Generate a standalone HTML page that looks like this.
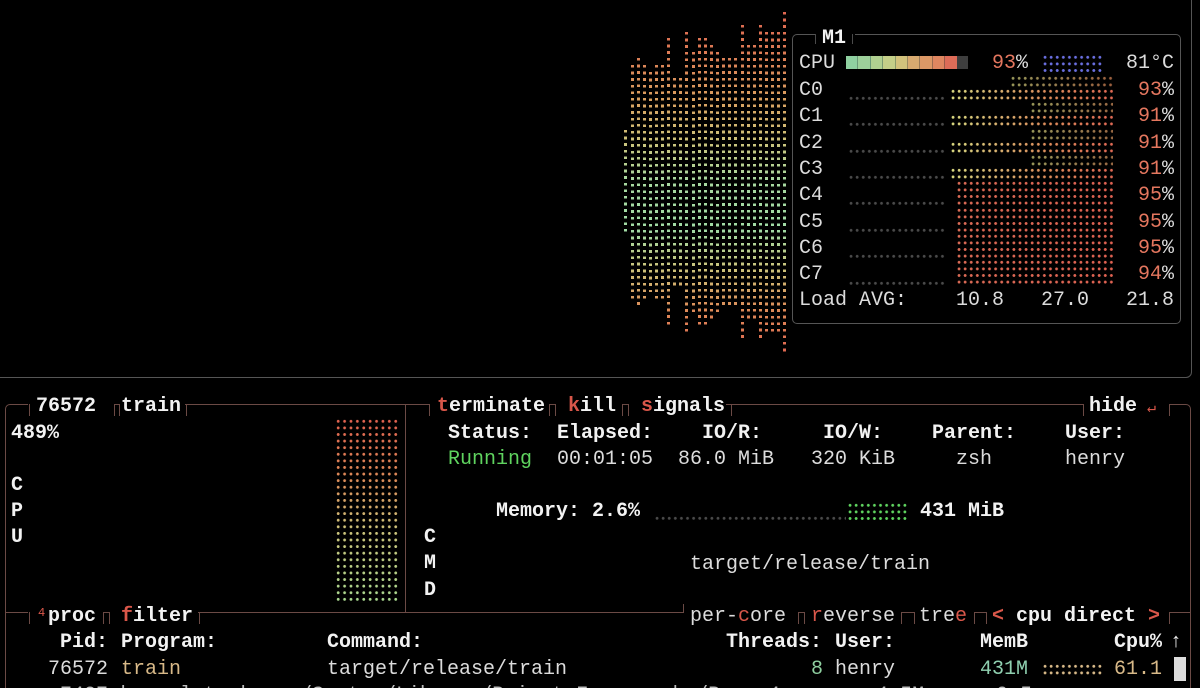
<!DOCTYPE html>
<html><head><meta charset="utf-8"><style>
html,body{margin:0;padding:0;background:#000;width:1200px;height:688px;overflow:hidden;}
body{position:relative;font-family:"Liberation Mono","DejaVu Sans Mono",monospace;font-size:20px;color:#dcdcdc;}
.t{position:absolute;line-height:26px;height:26px;white-space:pre;margin-top:2px;}
.b{font-weight:bold;color:#f2f2f2;}
.r{color:#d9574a;}
.ln{position:absolute;background:#6b4a45;}
.gl{position:absolute;background:#4a4a4a;}
.col{position:absolute;width:3px;background:linear-gradient(to bottom,#e0604f 0px,#dd7a55 50px,#d9a060 100px,#cdc27a 140px,#a8d8a0 180px,#a0dba5 230px,#cdc27a 270px,#dd8a58 310px,#e0604f 360px) fixed;
-webkit-mask-image:repeating-linear-gradient(to bottom,#000 0 2.7px,transparent 2.7px 6.6px);mask-image:repeating-linear-gradient(to bottom,#000 0 2.7px,transparent 2.7px 6.6px);}
.dots{position:absolute;-webkit-mask-image:radial-gradient(circle,#000 1.3px,transparent 1.6px);mask-image:radial-gradient(circle,#000 1.3px,transparent 1.6px);-webkit-mask-size:6.1px 6.6px;mask-size:6.1px 6.6px;}
.core{background:linear-gradient(to right,#d8d880 0px,#d9b070 50px,#dd8a5a 100px,#df6a55 160px);}
.core2{background:linear-gradient(to right,#d96a55,#df6252);}
</style></head><body>

<div style="position:absolute;left:-5px;top:-10px;width:1195px;height:386px;border:1px solid #555;border-radius:0 0 6px 0;"></div>

<div class="col" style="left:624px;top:130px;height:105px"></div>
<div class="col" style="left:631px;top:65px;height:234px"></div>
<div class="col" style="left:637px;top:58px;height:248px"></div>
<div class="col" style="left:643px;top:65px;height:234px"></div>
<div class="col" style="left:649px;top:72px;height:220px"></div>
<div class="col" style="left:655px;top:65px;height:234px"></div>
<div class="col" style="left:661px;top:65px;height:234px"></div>
<div class="col" style="left:667px;top:38px;height:288px"></div>
<div class="col" style="left:673px;top:78px;height:208px"></div>
<div class="col" style="left:679px;top:78px;height:208px"></div>
<div class="col" style="left:685px;top:32px;height:300px"></div>
<div class="col" style="left:692px;top:52px;height:260px"></div>
<div class="col" style="left:698px;top:38px;height:288px"></div>
<div class="col" style="left:704px;top:38px;height:288px"></div>
<div class="col" style="left:710px;top:45px;height:274px"></div>
<div class="col" style="left:716px;top:52px;height:260px"></div>
<div class="col" style="left:722px;top:58px;height:248px"></div>
<div class="col" style="left:728px;top:58px;height:248px"></div>
<div class="col" style="left:734px;top:58px;height:248px"></div>
<div class="col" style="left:741px;top:25px;height:314px"></div>
<div class="col" style="left:747px;top:45px;height:274px"></div>
<div class="col" style="left:753px;top:45px;height:274px"></div>
<div class="col" style="left:759px;top:25px;height:314px"></div>
<div class="col" style="left:765px;top:32px;height:300px"></div>
<div class="col" style="left:771px;top:32px;height:300px"></div>
<div class="col" style="left:783px;top:12px;height:340px"></div>
<div class="col" style="left:777px;top:32px;height:300px"></div>

<div style="position:absolute;left:792px;top:34px;width:387px;height:288px;border:1px solid #555;border-radius:5px;"></div>
<div style="position:absolute;left:815px;top:30px;width:40px;height:10px;background:#000"></div>
<div class="gl" style="left:815px;top:34px;width:1px;height:10px"></div>
<div class="gl" style="left:852px;top:34px;width:1px;height:10px"></div>
<div class="t b" style="left:822px;top:24px">M1</div>
<div class="t" style="left:799px;top:49px">CPU</div>
<div style="position:absolute;left:846px;top:56px;width:122px;height:13px;display:flex">
<div style="flex:1;background:#8fd0a0;border-right:1px solid #6a9a78"></div><div style="flex:1;background:#9dd09a;border-right:1px solid #6a9a78"></div><div style="flex:1;background:#b0d090;border-right:1px solid #7a9a70"></div><div style="flex:1;background:#c4cf88;border-right:1px solid #8a9a68"></div><div style="flex:1;background:#d2c27c;border-right:1px solid #9a8a60"></div><div style="flex:1;background:#d8aa70;border-right:1px solid #9a7a58"></div><div style="flex:1;background:#dc9866;border-right:1px solid #9a6a50"></div><div style="flex:1;background:#df8660;border-right:1px solid #9a5a48"></div><div style="flex:1;background:#de6c58;"></div><div style="flex:1;background:#3e3e3e;"></div></div>
<div class="t" style="left:992px;top:49px"><span style="color:#e5775f">93</span>%</div>
<div class="dots" style="left:1042px;top:54px;width:60px;height:20px;background:#6a6fe0"></div>
<div class="t" style="left:1126px;top:49px">81°C</div>

<div class="t" style="left:799px;top:76px">C0</div>
<div class="t" style="left:799px;top:102px">C1</div>
<div class="t" style="left:799px;top:129px">C2</div>
<div class="t" style="left:799px;top:155px">C3</div>
<div class="t" style="left:799px;top:181px">C4</div>
<div class="t" style="left:799px;top:208px">C5</div>
<div class="t" style="left:799px;top:234px">C6</div>
<div class="t" style="left:799px;top:260px">C7</div>
<div class="t" style="left:1138px;top:76px"><span style="color:#e5775f">93</span>%</div>
<div class="t" style="left:1138px;top:102px"><span style="color:#e5775f">91</span>%</div>
<div class="t" style="left:1138px;top:129px"><span style="color:#e5775f">91</span>%</div>
<div class="t" style="left:1138px;top:155px"><span style="color:#e5775f">91</span>%</div>
<div class="t" style="left:1138px;top:181px"><span style="color:#e5775f">95</span>%</div>
<div class="t" style="left:1138px;top:208px"><span style="color:#e5775f">95</span>%</div>
<div class="t" style="left:1138px;top:234px"><span style="color:#e5775f">95</span>%</div>
<div class="t" style="left:1138px;top:260px"><span style="color:#e5775f">94</span>%</div>
<div class="dots" style="left:848px;top:95px;width:97px;height:6px;background:#4a4a4a"></div>
<div class="dots" style="left:848px;top:121px;width:97px;height:6px;background:#4a4a4a"></div>
<div class="dots" style="left:848px;top:148px;width:97px;height:6px;background:#4a4a4a"></div>
<div class="dots" style="left:848px;top:174px;width:97px;height:6px;background:#4a4a4a"></div>
<div class="dots" style="left:848px;top:200px;width:97px;height:6px;background:#4a4a4a"></div>
<div class="dots" style="left:848px;top:227px;width:97px;height:6px;background:#4a4a4a"></div>
<div class="dots" style="left:848px;top:253px;width:97px;height:6px;background:#4a4a4a"></div>
<div class="dots" style="left:848px;top:280px;width:97px;height:6px;background:#4a4a4a"></div>

<div class="dots core" style="left:950px;top:88px;width:163px;height:14px"></div>
<div class="dots core" style="left:1010px;top:75px;width:103px;height:13px;opacity:.7"></div>
<div class="dots core" style="left:950px;top:114px;width:163px;height:14px"></div>
<div class="dots core" style="left:1030px;top:101px;width:83px;height:13px;opacity:.7"></div>
<div class="dots core" style="left:950px;top:141px;width:163px;height:14px"></div>
<div class="dots core" style="left:1030px;top:128px;width:83px;height:13px;opacity:.7"></div>
<div class="dots core" style="left:950px;top:167px;width:163px;height:14px"></div>
<div class="dots core" style="left:1030px;top:154px;width:83px;height:13px;opacity:.7"></div>
<div class="dots core2" style="left:956px;top:180px;width:157px;height:27px"></div>
<div class="dots core2" style="left:956px;top:207px;width:157px;height:27px"></div>
<div class="dots core2" style="left:956px;top:233px;width:157px;height:27px"></div>
<div class="dots core2" style="left:956px;top:259px;width:157px;height:27px"></div>
<div class="t" style="left:799px;top:286px">Load AVG:</div>
<div class="t" style="left:956px;top:286px">10.8</div>
<div class="t" style="left:1041px;top:286px">27.0</div>
<div class="t" style="left:1126px;top:286px">21.8</div>

<div style="position:absolute;left:5px;top:404px;width:1184px;height:300px;border:1px solid #6b4a45;border-radius:5px 5px 0 0;"></div>
<div class="ln" style="left:405px;top:404px;width:1px;height:209px"></div>
<div class="ln" style="left:5px;top:612px;width:1185px;height:1px"></div>

<div style="position:absolute;left:28px;top:395px;width:157px;height:14px;background:#000"></div>
<div class="ln" style="left:29px;top:404px;width:1px;height:12px"></div>
<div class="ln" style="left:114px;top:404px;width:1px;height:12px"></div>
<div class="ln" style="left:119px;top:404px;width:1px;height:12px"></div>
<div class="ln" style="left:186px;top:404px;width:1px;height:12px"></div>
<div class="ln" style="left:114px;top:404px;width:6px;height:1px"></div>
<div style="position:absolute;left:429px;top:395px;width:297px;height:14px;background:#000"></div>
<div class="ln" style="left:429px;top:404px;width:1px;height:12px"></div>
<div class="ln" style="left:549px;top:404px;width:1px;height:12px"></div>
<div class="ln" style="left:555px;top:404px;width:1px;height:12px"></div>
<div class="ln" style="left:549px;top:404px;width:6px;height:1px"></div>
<div class="ln" style="left:622px;top:404px;width:1px;height:12px"></div>
<div class="ln" style="left:628px;top:404px;width:1px;height:12px"></div>
<div class="ln" style="left:622px;top:404px;width:6px;height:1px"></div>
<div class="ln" style="left:731px;top:404px;width:1px;height:12px"></div>
<div style="position:absolute;left:1083px;top:395px;width:86px;height:14px;background:#000"></div>
<div class="ln" style="left:1083px;top:404px;width:1px;height:12px"></div>
<div class="ln" style="left:1169px;top:404px;width:1px;height:12px"></div>

<div class="t b" style="left:36px;top:392px">76572</div>
<div class="t b" style="left:121px;top:392px">train</div>
<div class="t b" style="left:437px;top:392px"><span class="r">t</span>erminate</div>
<div class="t b" style="left:568px;top:392px"><span class="r">k</span>ill</div>
<div class="t b" style="left:641px;top:392px"><span class="r">s</span>ignals</div>
<div class="t b" style="left:1089px;top:392px">hide</div>
<div class="t r" style="left:1147px;top:394px;font-size:15px">↵</div>

<div class="t b" style="left:11px;top:419px">489%</div>
<div class="t b" style="left:448px;top:419px">Status:</div>
<div class="t b" style="left:557px;top:419px">Elapsed:</div>
<div class="t b" style="left:702px;top:419px">IO/R:</div>
<div class="t b" style="left:823px;top:419px">IO/W:</div>
<div class="t b" style="left:932px;top:419px">Parent:</div>
<div class="t b" style="left:1065px;top:419px">User:</div>
<div class="t" style="left:448px;top:445px;color:#5fd35f">Running</div>
<div class="t" style="left:557px;top:445px">00:01:05</div>
<div class="t" style="left:678px;top:445px">86.0 MiB</div>
<div class="t" style="left:811px;top:445px">320 KiB</div>
<div class="t" style="left:956px;top:445px">zsh</div>
<div class="t" style="left:1065px;top:445px">henry</div>

<div class="t b" style="left:11px;top:471px">C</div>
<div class="t b" style="left:11px;top:497px">P</div>
<div class="t b" style="left:11px;top:523px">U</div>
<div class="t b" style="left:424px;top:523px">C</div>
<div class="t b" style="left:424px;top:549px">M</div>
<div class="t b" style="left:424px;top:576px">D</div>

<div style="position:absolute;left:335px;top:418px;width:64px;height:184px;background:linear-gradient(to bottom,#e0604f,#dd8a58 60px,#cdc27a 110px,#a8d890 184px);-webkit-mask-image:radial-gradient(circle,#000 1.3px,transparent 1.6px);mask-image:radial-gradient(circle,#000 1.3px,transparent 1.6px);-webkit-mask-size:6.4px 6.6px;mask-size:6.4px 6.6px"></div>

<div class="t b" style="left:496px;top:497px">Memory: 2.6%</div>
<div class="dots" style="left:654px;top:515px;width:192px;height:6px;background:#4a4a4a"></div>
<div class="dots" style="left:847px;top:502px;width:60px;height:20px;background:#5fd35f"></div>
<div class="t b" style="left:920px;top:497px">431 MiB</div>
<div class="t" style="left:690px;top:550px">target/release/train</div>

<div style="position:absolute;left:28px;top:603px;width:170px;height:14px;background:#000"></div>
<div class="ln" style="left:29px;top:612px;width:1px;height:12px"></div>
<div class="ln" style="left:103px;top:612px;width:1px;height:12px"></div>
<div class="ln" style="left:109px;top:612px;width:1px;height:12px"></div>
<div class="ln" style="left:103px;top:612px;width:6px;height:1px"></div>
<div class="ln" style="left:199px;top:612px;width:1px;height:12px"></div>
<div style="position:absolute;left:683px;top:603px;width:487px;height:14px;background:#000"></div>
<div class="ln" style="left:683px;top:604px;width:1px;height:9px"></div>
<div class="ln" style="left:798px;top:612px;width:1px;height:12px"></div>
<div class="ln" style="left:804px;top:612px;width:1px;height:12px"></div>
<div class="ln" style="left:798px;top:612px;width:6px;height:1px"></div>
<div class="ln" style="left:901px;top:612px;width:1px;height:12px"></div>
<div class="ln" style="left:914px;top:612px;width:1px;height:12px"></div>
<div class="ln" style="left:901px;top:612px;width:13px;height:1px"></div>
<div class="ln" style="left:974px;top:612px;width:1px;height:12px"></div>
<div class="ln" style="left:986px;top:612px;width:1px;height:12px"></div>
<div class="ln" style="left:974px;top:612px;width:12px;height:1px"></div>
<div class="ln" style="left:1169px;top:612px;width:1px;height:12px"></div>
<div class="t r" style="left:38px;top:598px;font-size:12px">4</div>
<div class="t b" style="left:48px;top:602px">proc</div>
<div class="t b" style="left:121px;top:602px"><span class="r">f</span>ilter</div>
<div class="t" style="left:690px;top:602px">per-<span class="r">c</span>ore</div>
<div class="t" style="left:811px;top:602px"><span class="r">r</span>everse</div>
<div class="t" style="left:919px;top:602px">tre<span class="r">e</span></div>
<div class="t b" style="left:992px;top:602px"><span class="r">&lt;</span> cpu direct <span class="r">&gt;</span></div>

<div class="t b" style="left:60px;top:628px">Pid:</div>
<div class="t b" style="left:121px;top:628px">Program:</div>
<div class="t b" style="left:327px;top:628px">Command:</div>
<div class="t b" style="left:726px;top:628px">Threads:</div>
<div class="t b" style="left:835px;top:628px">User:</div>
<div class="t b" style="left:980px;top:628px">MemB</div>
<div class="t b" style="left:1114px;top:628px">Cpu%</div>
<div class="t b" style="left:1170px;top:628px">↑</div>

<div class="t" style="left:48px;top:655px">76572</div>
<div class="t" style="left:121px;top:655px;color:#d8b988">train</div>
<div class="t" style="left:327px;top:655px">target/release/train</div>
<div class="t" style="left:811px;top:655px;color:#8fd0a0">8</div>
<div class="t" style="left:835px;top:655px">henry</div>
<div class="t" style="left:980px;top:655px;color:#8fd0b0">431M</div>
<div class="dots" style="left:1042px;top:663px;width:60px;height:14px;background:#d8b988"></div>
<div class="t" style="left:1114px;top:655px;color:#d8b988">61.1</div>
<div style="position:absolute;left:1174px;top:657px;width:12px;height:24px;background:#ddd"></div>
<div class="t" style="left:48px;top:681px;color:#bbb"> 7427 kernel_task    /System/Library/PrivateFrameworks/P    4        4.5M      0.5</div>
</body></html>
